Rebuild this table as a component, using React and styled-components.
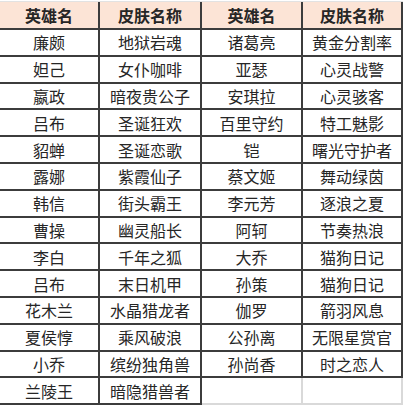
import React from "react";
import styled, { createGlobalStyle } from "styled-components";

const Global = createGlobalStyle`
  body {
    margin: 0;
    background: #ffffff;
    font-family: "Noto Sans CJK SC", "Noto Sans", sans-serif;
  }
`;

const Sheet = styled.div`
  display: grid;
  grid-template-columns: 100px 102px 101px 100px;
  margin-top: 1px;
  border-top: 1px solid #e2e2e2;
  width: 403px;
`;

const Cell = styled.div`
  box-sizing: border-box;
  height: ${props => (props.$head ? "28px" : "26.8px")};
  display: flex;
  align-items: center;
  justify-content: center;
  font-size: 16px;
  line-height: 1;
  white-space: nowrap;
  color: #262626;
  font-weight: ${props => (props.$head ? 700 : 400)};
  background: ${props => (props.$head ? "#fce4d6" : "#ffffff")};
  border-right: 2px solid ${props => (props.$blank ? "#d9d9d9" : "#3c3c3c")};
  border-bottom: 2px solid ${props => (props.$blank ? "#d9d9d9" : "#3c3c3c")};
  ${props => props.$strong && "border-right-color: #3c3c3c;"}
`;

const left = [
  ["廉颇", "地狱岩魂"],
  ["妲己", "女仆咖啡"],
  ["嬴政", "暗夜贵公子"],
  ["吕布", "圣诞狂欢"],
  ["貂蝉", "圣诞恋歌"],
  ["露娜", "紫霞仙子"],
  ["韩信", "街头霸王"],
  ["曹操", "幽灵船长"],
  ["李白", "千年之狐"],
  ["吕布", "末日机甲"],
  ["花木兰", "水晶猎龙者"],
  ["夏侯惇", "乘风破浪"],
  ["小乔", "缤纷独角兽"],
  ["兰陵王", "暗隐猎兽者"],
];

const right = [
  ["诸葛亮", "黄金分割率"],
  ["亚瑟", "心灵战警"],
  ["安琪拉", "心灵骇客"],
  ["百里守约", "特工魅影"],
  ["铠", "曙光守护者"],
  ["蔡文姬", "舞动绿茵"],
  ["李元芳", "逐浪之夏"],
  ["阿轲", "节奏热浪"],
  ["大乔", "猫狗日记"],
  ["孙策", "猫狗日记"],
  ["伽罗", "箭羽风息"],
  ["公孙离", "无限星赏官"],
  ["孙尚香", "时之恋人"],
  null,
];

export default function App() {
  return (
    <>
      <Global />
      <Sheet>
        <Cell $head>英雄名</Cell>
        <Cell $head>皮肤名称</Cell>
        <Cell $head>英雄名</Cell>
        <Cell $head>皮肤名称</Cell>
        {left.map((row, i) => (
          <React.Fragment key={i}>
            <Cell>{row[0]}</Cell>
            <Cell>{row[1]}</Cell>
            <Cell $blank={!right[i]}>{right[i] ? right[i][0] : ""}</Cell>
            <Cell $blank={!right[i]}>{right[i] ? right[i][1] : ""}</Cell>
          </React.Fragment>
        ))}
      </Sheet>
    </>
  );
}
